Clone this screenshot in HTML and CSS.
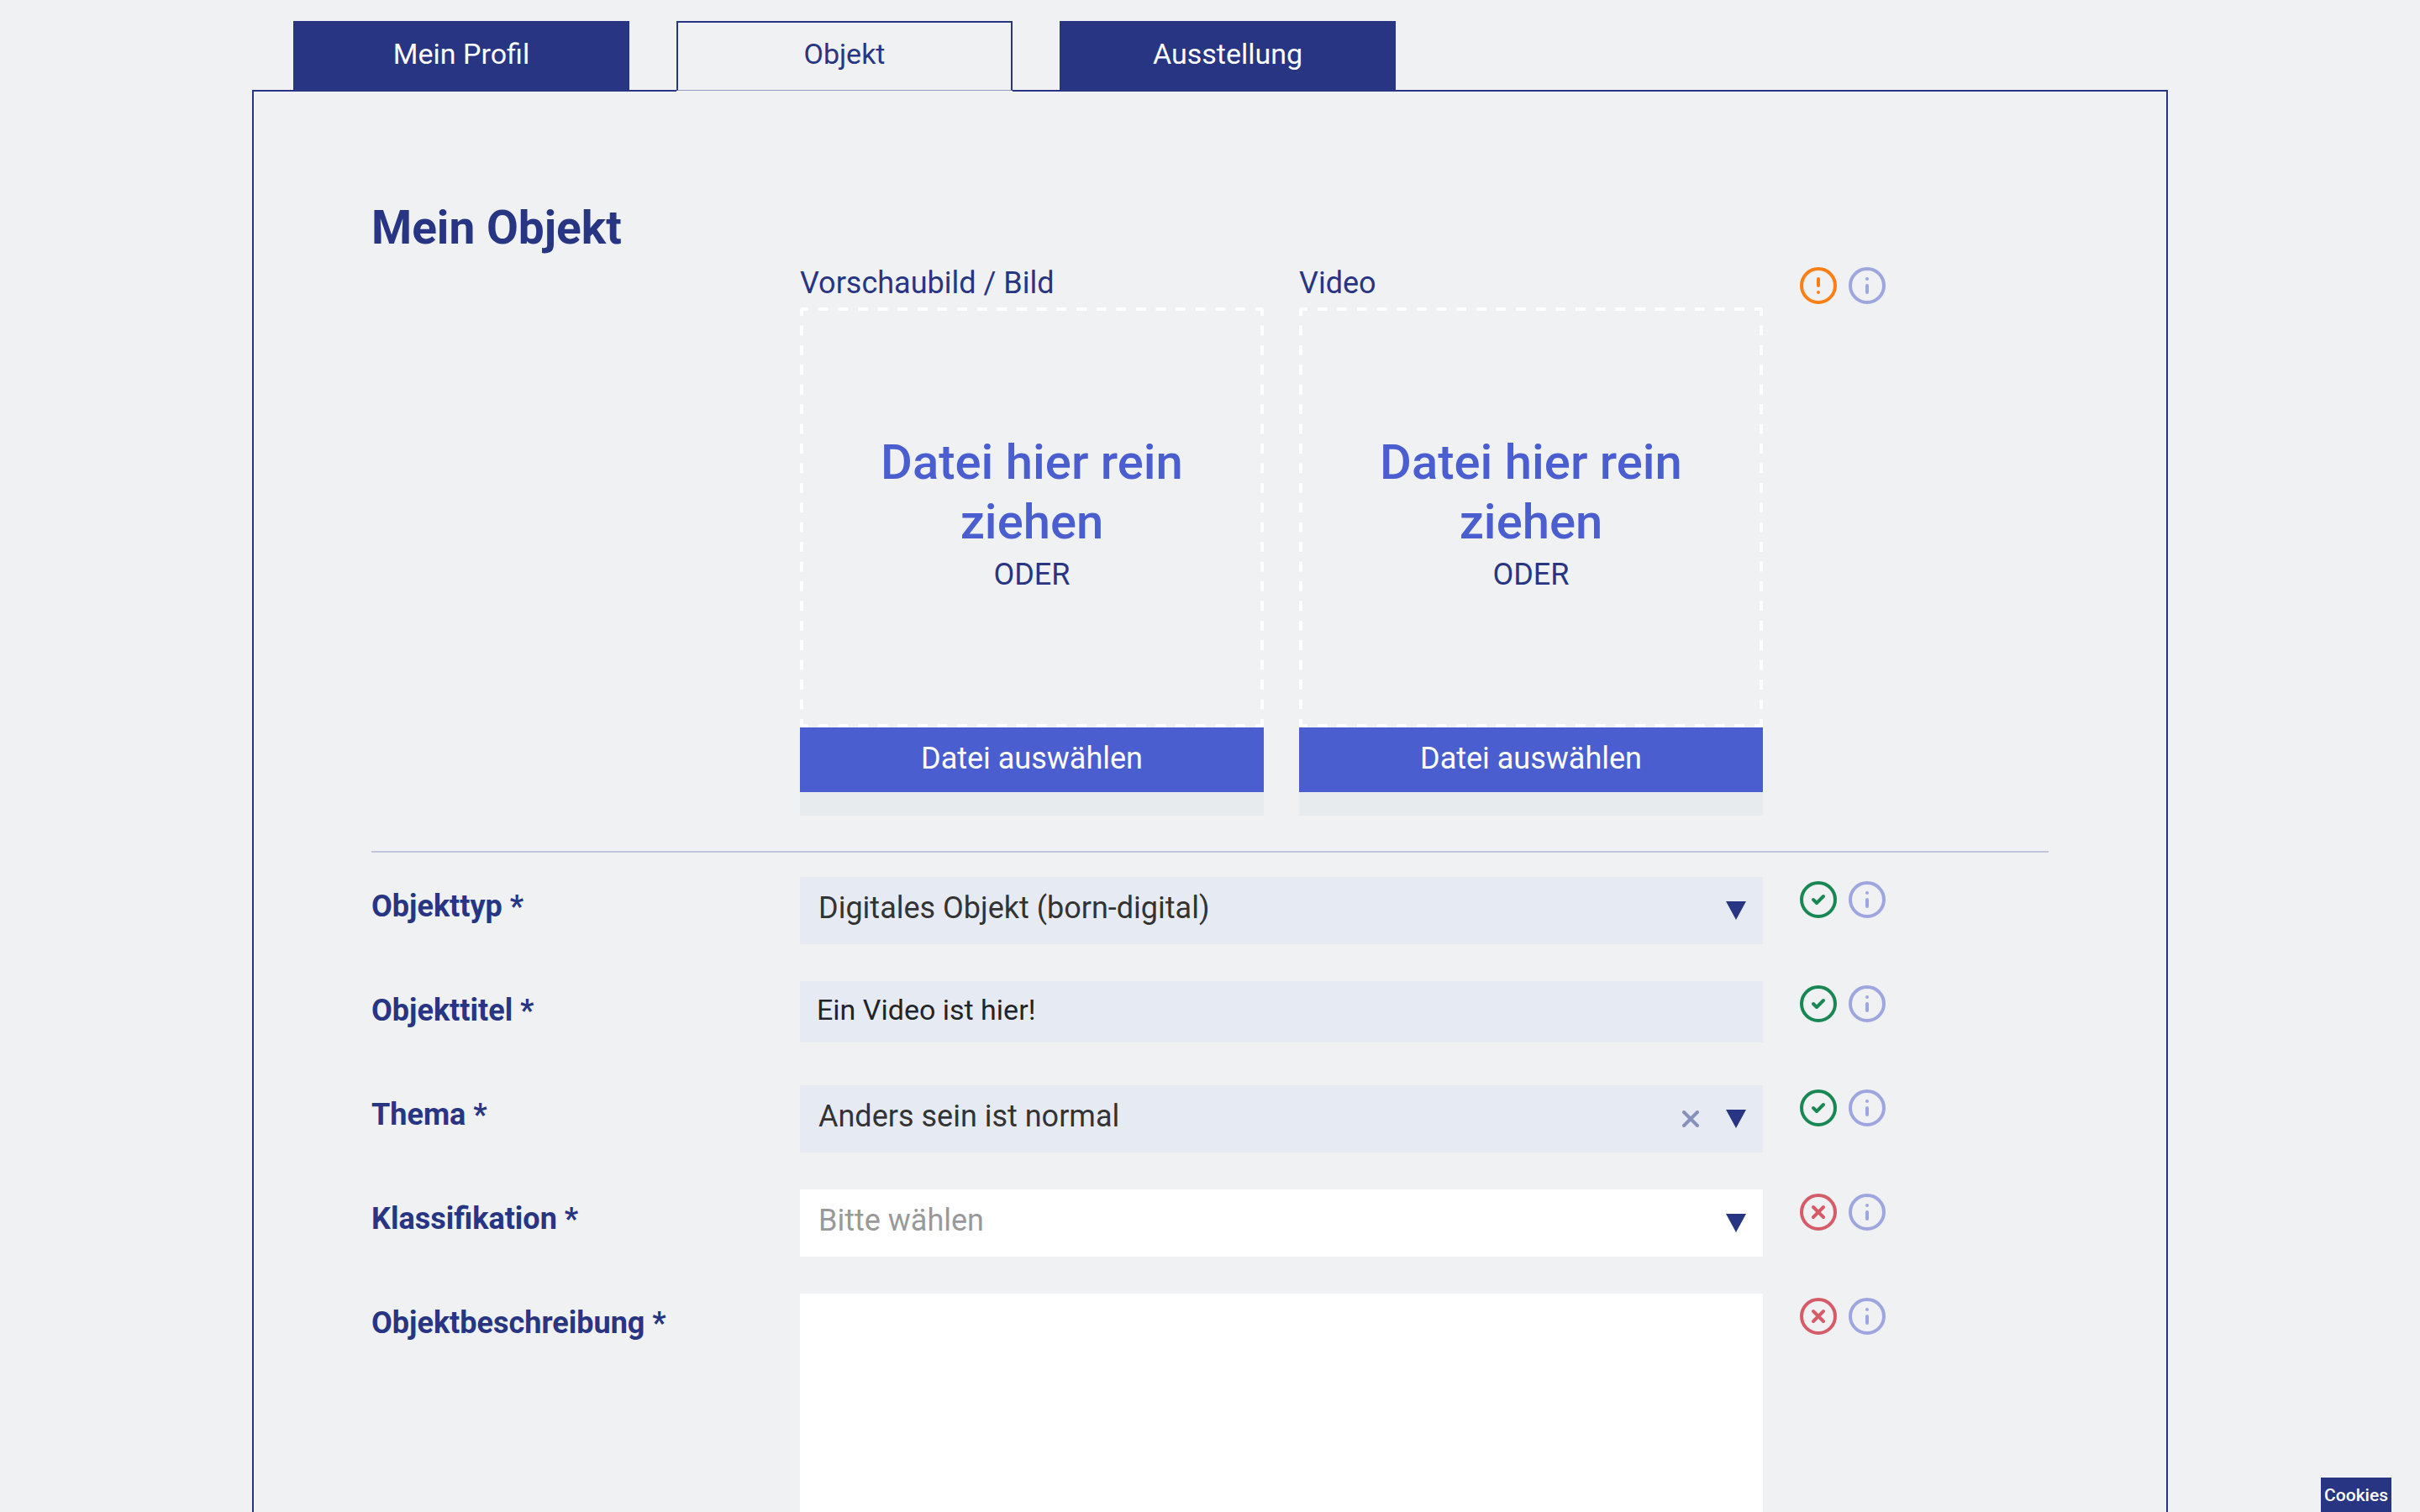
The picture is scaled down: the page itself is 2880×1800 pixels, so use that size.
FILE: index.html
```html
<!DOCTYPE html>
<html lang="de">
<head>
<meta charset="utf-8">
<meta name="viewport" content="width=device-width, initial-scale=1">
<title>Mein Objekt</title>
<link rel="stylesheet" href="styles.css">
</head>
<body>
<svg class="sprite" aria-hidden="true">
  <symbol id="icon-info" viewBox="0 0 44 44"><circle cx="22" cy="22" r="20"/><path d="M22 14v.01M22 22v8"/></symbol>
  <symbol id="icon-warn" viewBox="0 0 44 44"><circle cx="22" cy="22" r="20"/><path d="M22 14v8M22 30v.01"/></symbol>
  <symbol id="icon-ok" viewBox="0 0 44 44"><circle cx="22" cy="22" r="20"/><path d="M16 22l4 4 8-8"/></symbol>
  <symbol id="icon-error" viewBox="0 0 44 44"><circle cx="22" cy="22" r="20"/><path d="M16 16l12 12M28 16L16 28"/></symbol>
  <symbol id="icon-clear" viewBox="0 0 20 20"><path d="M2 2l16 16M18 2L2 18"/></symbol>
  <symbol id="icon-arrow" viewBox="0 0 24 22"><path d="M0 0h24L12 22z"/></symbol>
</svg>
<div class="page">
  <nav class="tabs">
    <a class="tab" href="#profil">Mein Profil</a>
    <a class="tab tab-active" href="#objekt" aria-current="page">Objekt</a>
    <a class="tab" href="#ausstellung">Ausstellung</a>
  </nav>
  <main class="panel">
    <h1 class="title">Mein Objekt</h1>
    <section class="row row-upload">
      <div class="uploads">
        <div class="upload">
          <span class="upload-label">Vorschaubild / Bild</span>
          <div class="dropzone"><strong class="drop-hint">Datei hier rein ziehen</strong><span class="drop-or">ODER</span></div>
          <button class="upload-button" type="button">Datei auswählen</button>
        </div>
        <div class="upload">
          <span class="upload-label">Video</span>
          <div class="dropzone"><strong class="drop-hint">Datei hier rein ziehen</strong><span class="drop-or">ODER</span></div>
          <button class="upload-button" type="button">Datei auswählen</button>
        </div>
      </div>
      <div class="status">
        <svg class="icon icon-warn"><use href="#icon-warn"/></svg>
        <svg class="icon"><use href="#icon-info"/></svg>
      </div>
    </section>
    <hr class="divider">
    <form class="fields">
      <div class="row">
        <label class="label" for="typ">Objekttyp *</label>
        <div class="control">
          <select class="select" id="typ"><option>Digitales Objekt (born-digital)</option></select>
          <div class="control-icons"><svg class="arrow"><use href="#icon-arrow"/></svg></div>
        </div>
        <div class="status">
          <svg class="icon icon-ok"><use href="#icon-ok"/></svg>
          <svg class="icon"><use href="#icon-info"/></svg>
        </div>
      </div>
      <div class="row">
        <label class="label" for="titel">Objekttitel *</label>
        <div class="control">
          <input class="input" id="titel" type="text" value="Ein Video ist hier!">
        </div>
        <div class="status">
          <svg class="icon icon-ok"><use href="#icon-ok"/></svg>
          <svg class="icon"><use href="#icon-info"/></svg>
        </div>
      </div>
      <div class="row">
        <label class="label" for="thema">Thema *</label>
        <div class="control">
          <select class="select" id="thema"><option>Anders sein ist normal</option></select>
          <div class="control-icons">
            <button class="clear" type="button" aria-label="Auswahl entfernen"><svg class="clear-icon"><use href="#icon-clear"/></svg></button>
            <svg class="arrow"><use href="#icon-arrow"/></svg>
          </div>
        </div>
        <div class="status">
          <svg class="icon icon-ok"><use href="#icon-ok"/></svg>
          <svg class="icon"><use href="#icon-info"/></svg>
        </div>
      </div>
      <div class="row">
        <label class="label" for="klasse">Klassifikation *</label>
        <div class="control">
          <select class="select select-empty" id="klasse"><option>Bitte wählen</option></select>
          <div class="control-icons"><svg class="arrow"><use href="#icon-arrow"/></svg></div>
        </div>
        <div class="status">
          <svg class="icon icon-error"><use href="#icon-error"/></svg>
          <svg class="icon"><use href="#icon-info"/></svg>
        </div>
      </div>
      <div class="row row-grow">
        <label class="label" for="text">Objektbeschreibung *</label>
        <textarea class="textarea" id="text"></textarea>
        <div class="status">
          <svg class="icon icon-error"><use href="#icon-error"/></svg>
          <svg class="icon"><use href="#icon-info"/></svg>
        </div>
      </div>
    </form>
  </main>
</div>
<button class="cookies" type="button">Cookies</button>
</body>
</html>
```
FILE: styles.css
```css
:root {
  --navy: #283583;
  --blue: #4a5ed0;
  --bg: #eff1f3;
  --field: #e6ebf3;
}

* { box-sizing: border-box; }

body {
  margin: 0;
  background: var(--bg);
  color: var(--navy);
  font: 36px/58px Roboto, "Liberation Sans", sans-serif;
}

button, input, select, textarea {
  margin: 0;
  border: 0;
  border-radius: 0;
  font: inherit;
}

.sprite { position: absolute; width: 0; height: 0; }

.page {
  display: flex;
  flex-direction: column;
  max-width: 2280px;
  min-height: 100vh;
  margin: 0 auto;
  padding-top: 25px;
}

.tabs {
  display: flex;
  gap: 56px;
  margin-bottom: -1px;
  padding-left: 49px;
}

.tab {
  display: flex;
  align-items: center;
  justify-content: center;
  width: 400px;
  height: 83px;
  padding-bottom: 6px;
  background: var(--navy);
  color: #fff;
  font-size: 34px;
  text-decoration: none;
  z-index: 1;
}

.tab-active {
  border: 2px solid var(--navy);
  border-bottom: 1px solid #9298c0;
  background: var(--bg);
  box-shadow: 0 1px 0 var(--bg);
  color: var(--navy);
}

.panel {
  display: flex;
  flex: 1;
  flex-direction: column;
  padding: 132px 140px 0;
  border: 2px solid var(--navy);
  border-bottom: 0;
}

.title {
  margin: 0 0 8px;
  font-size: 55px;
  line-height: 60px;
}

.row {
  display: grid;
  grid-template-columns: 510fr 1146fr 340fr;
  min-height: 80px;
}

.uploads {
  display: grid;
  grid-column: 2;
  grid-template-columns: 1fr 1fr;
  gap: 42px;
}

.upload {
  display: flex;
  flex-direction: column;
}

.upload-label {
  line-height: 57px;
}

/* Long dashes, evenly fitted to each side, centred on the corners */
.dropzone {
  --dash-x: linear-gradient(90deg, #fff 25%, transparent 25% 75%, #fff 75%);
  --dash-y: linear-gradient(#fff 25%, transparent 25% 75%, #fff 75%);
  display: flex;
  flex-direction: column;
  align-items: center;
  justify-content: center;
  height: 500px;
  padding: 0 80px 6px;
  border: 4px solid transparent;
  border-radius: 4px;
  background:
    var(--dash-x) 0 -4px / 24px 4px round no-repeat border-box,
    var(--dash-x) 0 calc(100% + 4px) / 24px 4px round no-repeat border-box,
    var(--dash-y) -4px 0 / 4px 24px no-repeat round border-box,
    var(--dash-y) calc(100% + 4px) 0 / 4px 24px no-repeat round border-box;
  background-origin: padding-box;
  text-align: center;
}

.drop-hint {
  color: var(--blue);
  font-size: 58px;
  font-weight: 500;
  line-height: 71px;
}

.drop-or { line-height: 54px; }

.upload-button {
  box-sizing: content-box;
  height: 73px;
  padding: 0 0 4px;
  border-bottom: 28px solid #e7ebee;
  background: var(--blue);
  background-clip: padding-box;
  color: #fff;
}

.status {
  display: flex;
  gap: 14px;
  padding: 5px 0 0 44px;
}

.row-upload .status { padding-top: 9px; }

.icon {
  width: 44px;
  height: 44px;
  fill: none;
  stroke: #9ea6e0;
  stroke-width: 4;
  stroke-linecap: round;
  stroke-linejoin: round;
}

.icon-warn { stroke: #ff7f17; }
.icon-ok { stroke: #198754; }
.icon-error { stroke: #d65b68; }

.divider {
  width: 100%;
  height: 2px;
  margin: 42px 0 29px;
  border: 0;
  background: #c0c5dc;
}

.fields {
  display: flex;
  flex: 1;
  flex-direction: column;
  gap: 44px;
}

.row-grow { flex: 1; }

.label {
  font-weight: 700;
  line-height: 70px;
}

.control {
  display: grid;
  align-items: start;
}

.control > * { grid-area: 1 / 1; }

.select {
  width: 100%;
  height: 80px;
  padding: 0 120px 6px 22px;
  appearance: none;
  background: var(--field);
  color: #333;
}

.select-empty {
  background: #fff;
  color: #999;
}

.input {
  width: 100%;
  height: 73px;
  padding: 0 20px 6px;
  background: var(--field);
  color: #212529;
  font-size: 34px;
}

.control-icons {
  display: flex;
  align-items: center;
  justify-self: end;
  gap: 32px;
  height: 80px;
  padding-right: 20px;
  pointer-events: none;
}

.arrow {
  width: 24px;
  height: 22px;
  fill: var(--navy);
}

.clear {
  display: flex;
  padding: 0;
  background: none;
  pointer-events: auto;
}

.clear-icon {
  width: 20px;
  height: 20px;
  fill: none;
  stroke: #8791bc;
  stroke-width: 4;
  stroke-linecap: round;
}

.textarea {
  min-height: 240px;
  padding: 16px 22px;
  background: #fff;
  resize: none;
}

.cookies {
  position: fixed;
  right: 34px;
  bottom: 0;
  height: 41px;
  padding: 0 4px;
  background: var(--navy);
  color: #fff;
  font-size: 21px;
  font-weight: 500;
  line-height: 38px;
}
```
